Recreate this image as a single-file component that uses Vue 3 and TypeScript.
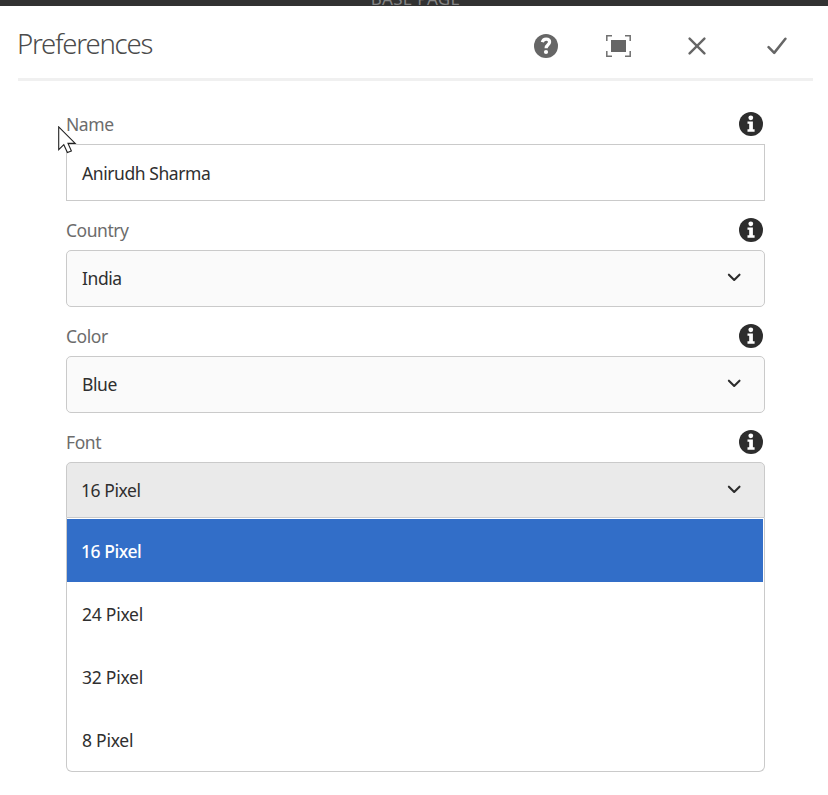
<script setup lang="ts">
import { ref } from 'vue'

interface Field {
  label: string
  value: string
  kind: 'text' | 'select'
  open?: boolean
}

const fields: Field[] = [
  { label: 'Name', value: 'Anirudh Sharma', kind: 'text' },
  { label: 'Country', value: 'India', kind: 'select' },
  { label: 'Color', value: 'Blue', kind: 'select' },
  { label: 'Font', value: '16 Pixel', kind: 'select', open: true },
]
const options = ['16 Pixel', '24 Pixel', '32 Pixel', '8 Pixel']
const selected = ref('16 Pixel')
</script>

<template>
  <div class="page">
    <div class="backdrop-bar"><span class="backdrop-text">BASE PAGE</span></div>
    <header class="header">
      <h1 class="title"><span>Preferences</span></h1>
      <nav class="actions">
        <button class="action help" aria-label="Help">
          <svg width="24" height="24" viewBox="0 0 24 24">
            <circle cx="12" cy="12" r="12" fill="#666" />
            <path d="M8.3 8.2C8.9 6 10.2 5.1 12.1 5.1C14.3 5.1 15.6 6.3 15.6 8.1C15.6 10.8 12.1 10.7 12.1 14.2" fill="none" stroke="#fff" stroke-width="3.2" />
            <circle cx="12" cy="18" r="2.1" fill="#fff" />
          </svg>
        </button>
        <button class="action full" aria-label="Fullscreen">
          <svg width="25" height="22" viewBox="0 0 25 22">
            <rect x="5" y="5" width="15" height="12" fill="#666" />
            <path d="M.8 6V.8H6M19 .8H24.2V6M24.2 16V21.2H19M6 21.2H.8V16" fill="none" stroke="#707070" stroke-width="1.5" />
          </svg>
        </button>
        <button class="action close" aria-label="Cancel">
          <svg width="18" height="18" viewBox="0 0 18 18">
            <path d="M1.6 1.6L16.4 16.4M16.4 1.6L1.6 16.4" fill="none" stroke="#666" stroke-width="2.4" stroke-linecap="round" />
          </svg>
        </button>
        <button class="action done" aria-label="Done">
          <svg width="20" height="18" viewBox="0 0 20 18">
            <path d="M1.6 10.2L7.2 15.9L18.4 1.8" fill="none" stroke="#666" stroke-width="2.5" stroke-linecap="round" stroke-linejoin="round" />
          </svg>
        </button>
      </nav>
    </header>

    <main class="form">
      <section v-for="field in fields" :key="field.label" class="field">
        <div class="label-row">
          <label class="label">{{ field.label }}</label>
          <svg class="info" width="24" height="24" viewBox="0 0 24 24">
            <circle cx="12" cy="12" r="12" fill="#2d2d2d" />
            <circle cx="11.8" cy="5.8" r="2.4" fill="#fff" />
            <path d="M8.5 9.5H13.9V17.2H15.6V19.7H8.5V17.2H10.2V11.8H8.5Z" fill="#fff" />
          </svg>
        </div>
        <div class="control" :class="[field.kind, { open: field.open }]">
          <span class="value">{{ field.value }}</span>
          <svg v-if="field.kind === 'select'" width="14" height="9" viewBox="0 0 14 9">
            <path d="M1.9 1.7L7.2 6.9L12.5 1.7" fill="none" stroke="#2c2c2c" stroke-width="2.1" stroke-linecap="round" stroke-linejoin="round" />
          </svg>
        </div>
        <ul v-if="field.open" class="menu">
          <li v-for="option in options" :key="option" class="option" :class="{ selected: option === selected }" @click="selected = option">
            {{ option }}
          </li>
        </ul>
      </section>
    </main>

    <svg class="cursor" width="19" height="29" viewBox="0 0 19 29">
      <path d="M.7 .9V23.6L5.8 18.7L9.4 26.6L13.4 24.9L10 17.4H17.2Z" fill="#fff" stroke="#222" stroke-width="1.1" />
    </svg>
  </div>
</template>

<style>
body {
  background: #fff;
}
</style>

<style scoped>
.page {
  position: relative;
  width: 828px;
  height: 795px;
  overflow: hidden;
  background: #fff;
  color: #2f2f2f;
  font-family: "Noto Sans", "Open Sans", sans-serif;
  font-size: 17.5px;
  letter-spacing: -0.35px;
}
.backdrop-bar {
  display: flex;
  justify-content: center;
  align-items: flex-end;
  height: 6px;
  overflow: hidden;
  background: #323232;
}
.backdrop-text {
  margin: 0 0 -3px 3px;
  color: #858585;
  font-size: 17px;
  line-height: 20px;
  letter-spacing: 0.3px;
}
.header {
  display: flex;
  justify-content: space-between;
  height: 72px;
  margin: 0 15px 0 18px;
  border-bottom: 3px solid #f0f0f0;
}
.title {
  margin: 0 0 0 -1px;
  color: #4b4b4b;
  font-size: 27.5px;
  font-weight: 300;
  line-height: 76px;
  letter-spacing: -1.2px;
}
.actions {
  display: flex;
  align-items: center;
  height: 80px;
}
.action {
  display: flex;
  padding: 0;
  border: 0;
  background: none;
}
.help {
  margin-right: 48px;
}
.full {
  margin-right: 57px;
}
.close {
  margin-right: 61px;
}
.done {
  margin-right: 26px;
}
.form {
  width: 699px;
  margin: 25px 0 0 66px;
}
.field {
  margin-bottom: 11px;
}
.label-row {
  display: flex;
  justify-content: space-between;
  height: 38px;
  padding-right: 2px;
  box-sizing: border-box;
}
.label {
  color: #6c6c6c;
  line-height: 37px;
  letter-spacing: -0.45px;
}
.info {
  margin-top: 5.5px;
}
.control {
  display: flex;
  align-items: center;
  justify-content: space-between;
  box-sizing: border-box;
  height: 57px;
  padding: 0 23px 2px 15px;
  border: 1px solid #cacaca;
  background: #fff;
}
.value {
  line-height: 24px;
  letter-spacing: -0.43px;
}
.text .value {
  padding-top: 2px;
}
.select {
  border-radius: 5px;
  background: #fafafa;
}
.select.open {
  height: 56px;
  padding-bottom: 1px;
  border-radius: 5px 5px 0 0;
  background: #eaeaea;
}
.open .value {
  margin-left: -1px;
}
.menu {
  margin: 0;
  padding: 1px 1px 0 0;
  border: 1px solid #cacaca;
  border-top: 0;
  border-radius: 0 0 6px 6px;
  list-style: none;
}
.option {
  height: 63px;
  padding-left: 15px;
  line-height: 65px;
  letter-spacing: -0.25px;
}
.option.selected {
  padding-left: 14px;
  background: #326ec8;
  color: #fff;
  font-weight: 500;
  letter-spacing: -0.45px;
}
.cursor {
  position: absolute;
  top: 126px;
  left: 58px;
}
</style>
